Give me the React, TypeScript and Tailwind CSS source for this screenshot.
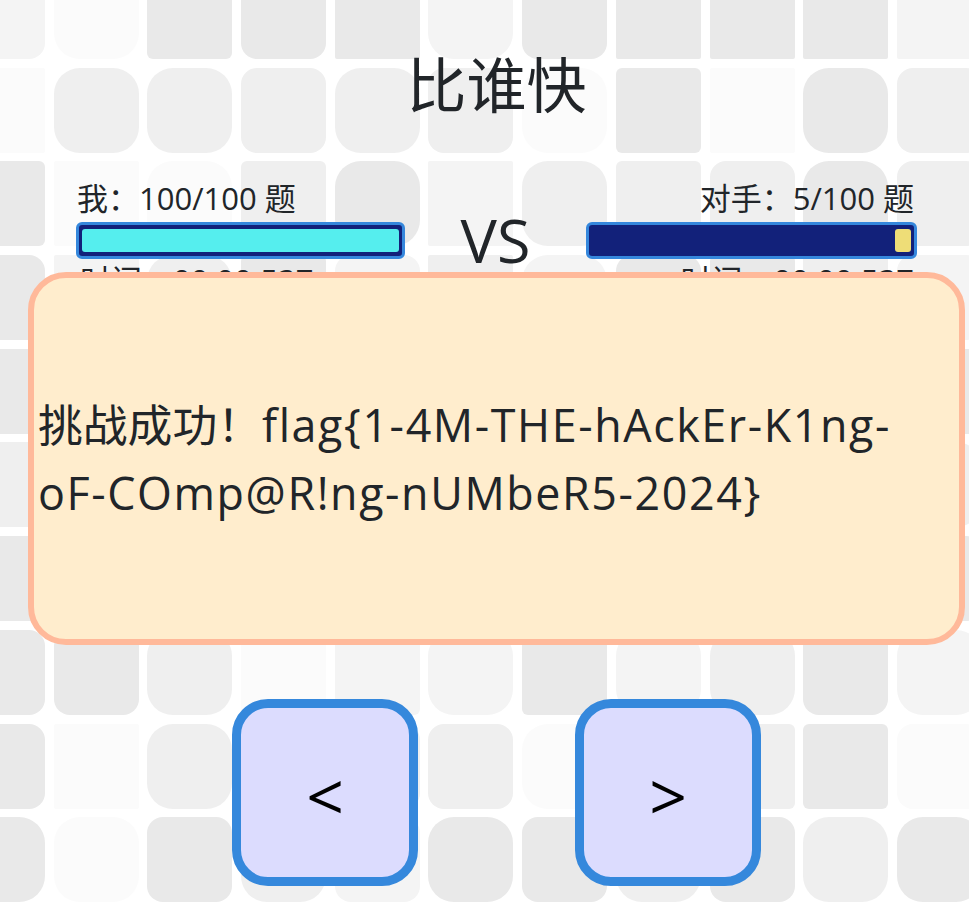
import React from 'react';

// background tiles: shade letter + corner style, 11 columns x 10 rows
const TILE_ROWS = [
  'bm al ds dm d0 bl dm d0 d0 d0 b0',
  'a0 cl cl cm cl cm al ds a0 dl cm',
  'ds a0 al cs dl b0 cl cs cm dl cm',
  'dm b0 cl ds bm c0 bl dm ds c0 bm',
  'd0 cm al bs dm a0 cl bs d0 cm ds',
  'cm ds b0 cl am ds c0 bl cm d0 cl',
  'ds al cm d0 bl cs dm a0 cs bl dm',
  'dm dm cl a0 bs bl ds bl cl dm bl',
  'dm a0 cl cm cm cm al cm cs ds am',
  'dl al dm cl bm dl dm cl dm cl dl',
];

const SHADES: Record<string, string> = {
  a: 'bg-[#fbfbfb]',
  b: 'bg-[#f4f4f4]',
  c: 'bg-[#efefef]',
  d: 'bg-[#e9e9e9]',
};

const CORNERS: Record<string, string> = {
  '0': 'rounded-[2px]',
  s: 'rounded-md',
  m: 'rounded-2xl',
  l: 'rounded-[26px]',
};

function TileBackground() {
  const tiles = TILE_ROWS.flatMap((row) => row.split(' '));
  return (
    <div className="absolute inset-0 overflow-hidden bg-white">
      <div className="grid grid-cols-[repeat(11,85px)] auto-rows-[85px] gap-[8.7px] ml-[-40px] mt-[-26px]">
        {tiles.map((t, i) => (
          <div key={i} className={`${SHADES[t[0]]} ${CORNERS[t[1]]}`} />
        ))}
      </div>
    </div>
  );
}

function ProgressBar({ percent, reverse }: { percent: number; reverse?: boolean }) {
  return (
    <div className={`flex ${reverse ? 'justify-end' : 'justify-start'} h-[37px] border-[3px] border-[#3587dc] bg-[#12217a] rounded-md px-[3px] py-[4px]`}>
      <div
        className={`h-full rounded-[3px] ${reverse ? 'bg-[#eedd77]' : 'bg-[#55eeee]'}`}
        style={{ width: `${percent}%` }}
      />
    </div>
  );
}

export default function App() {
  return (
    <div
      className="relative h-[907px] overflow-hidden text-[#212529]"
      style={{ fontFamily: '"Open Sans", "Noto Sans CJK SC", sans-serif' }}
    >
      <TileBackground />

      <div className="relative ml-[28px] w-[937px]">
        <h1 className="pt-[40px] text-center text-[60px] leading-[1.5] font-normal">比谁快</h1>

        {/* players */}
        <div className="mt-[44px] flex items-center justify-between px-[48px]">
          <div className="w-[329px]">
            <div className="pl-[1px] text-[31px] leading-[48px]">我：100/100 题</div>
            <ProgressBar percent={100} />
            <div className="mb-[6px] pl-[4px] text-[31px] leading-[42px]">时间：00:00.537</div>
          </div>
          <div className="text-[61px] leading-none pb-[2px]">VS</div>
          <div className="w-[331px] text-right">
            <div className="pr-[3px] text-[31px] leading-[48px]">对手：5/100 题</div>
            <ProgressBar percent={5} reverse />
            <div className="mb-[6px] pr-[3px] text-[31px] leading-[42px]">时间：00:00.537</div>
          </div>
        </div>

        {/* question area */}
        <div className="h-[392px]" />

        <div className="flex justify-center gap-[157px]">
          <button className="flex h-[187px] w-[186px] items-center justify-center rounded-[36px] border-[9px] border-[#3588dc] bg-[#dcdcfe] pt-[4px] text-[66px] leading-none text-black">
            &lt;
          </button>
          <button className="flex h-[187px] w-[186px] items-center justify-center rounded-[36px] border-[9px] border-[#3588dc] bg-[#dcdcfe] pt-[4px] text-[66px] leading-none text-black">
            &gt;
          </button>
        </div>

        {/* result overlay */}
        <div className="absolute left-0 top-[272px] flex h-[373px] w-[937px] items-center rounded-[38px] border-[6px] border-[#ffb99a] bg-[#ffedcd] px-[4px]">
          <p className="text-[44.8px] leading-[1.5]">
            挑战成功！<span className="tracking-[1.6px]">flag{'{'}1-4M-THE-hAckEr-K1ng-oF-COmp@R!ng-nUMbeR5-2024{'}'}</span>
          </p>
        </div>
      </div>
    </div>
  );
}
